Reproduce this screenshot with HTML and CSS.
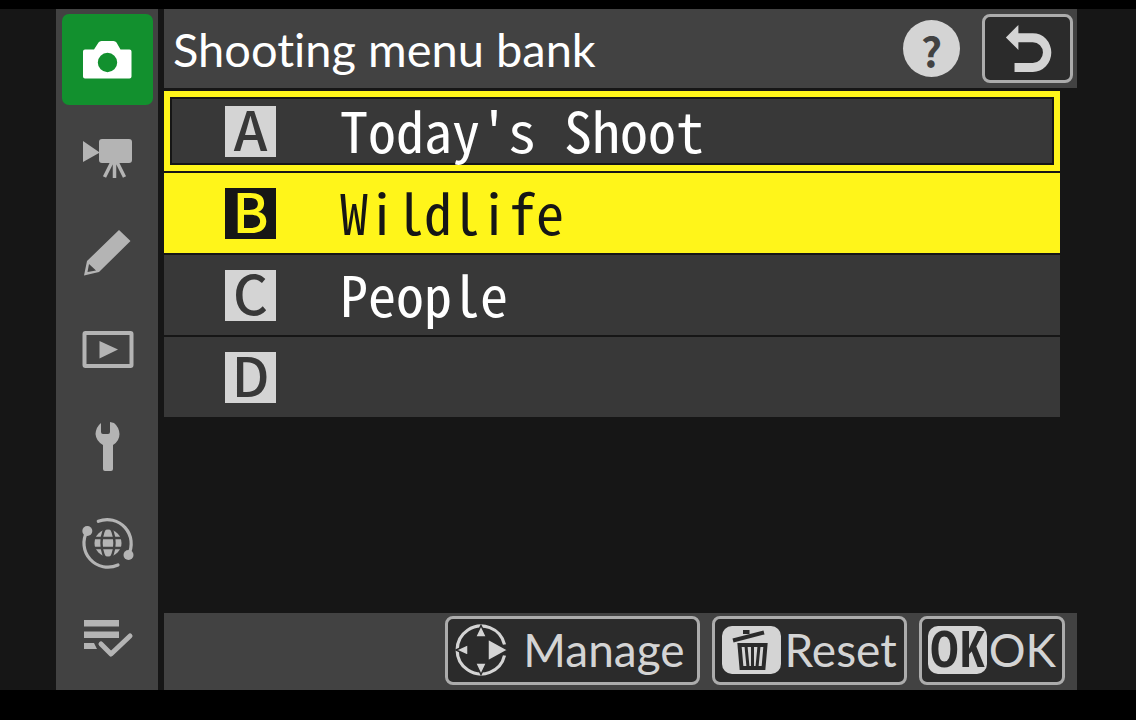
FILE: index.html
```html
<!DOCTYPE html>
<html lang="en">
<head>
<meta charset="utf-8">
<title>Shooting menu bank</title>
<link rel="stylesheet" href="styles.css">
</head>
<body>
<div class="screen">
  <nav class="tabs" aria-label="Menus">
    <button class="tab tab-active" aria-label="Photo shooting menu">
      <svg class="icon" viewBox="1 0 52 52"><path fill="#fff" fill-rule="evenodd" d="M2 17.500Q2 15.500 4 15.500H13L17.500 8.500Q18.500 7 20.500 7H32.500Q34.500 7 35.500 8.500L39.500 15.500H48.500Q50.500 15.500 50.500 17.500V42.500Q50.500 44.500 48.500 44.500H4Q2 44.500 2 42.500ZM26.500 18.800A9.700 9.700 0 1 0 26.500 38.200A9.700 9.700 0 1 0 26.500 18.800Z"/></svg>
    </button>
    <button class="tab" aria-label="Video recording menu">
      <svg class="icon" viewBox="1 -2 52 52"><path fill="currentColor" d="M2 8L18 19V9Q18 6 21 6H48Q51 6 51 9V27Q51 30 48 30H21Q18 30 18 27V20L2 29Z"/><path fill="none" stroke="currentColor" stroke-width="3.500" d="M31 29L23.500 44M33.500 29V45M36 29L43.500 44"/></svg>
    </button>
    <button class="tab" aria-label="Custom settings menu">
      <svg class="icon" viewBox="1 1 52 52"><path fill="currentColor" fill-rule="evenodd" d="M38 3L49.500 14L18 45L3 48.500L6 34ZM8 37L6.500 45L15 43.500Z"/></svg>
    </button>
    <button class="tab" aria-label="Playback menu">
      <svg class="icon" viewBox="1 1 52 52"><rect x="3.500" y="9" width="47" height="33" rx="1" fill="none" stroke="currentColor" stroke-width="4"/><path fill="currentColor" d="M18.500 17L37 25.500L18.500 34.500Z"/></svg>
    </button>
    <button class="tab" aria-label="Setup menu">
      <svg class="icon" viewBox="1 1 52 52"><path fill="currentColor" d="M20 2V11Q20 13 22 13H27Q29 13 29 11V1L33 2Q38 6 38.500 13Q38.500 20 32 24V48Q32 50 30 50H24Q22 50 22 48V24Q15 20 14.500 13Q15 6 20 2Z"/></svg>
    </button>
    <button class="tab" aria-label="Network menu">
      <svg class="icon" viewBox="0 2 52 52"><g fill="none" stroke="currentColor" stroke-width="3.200" stroke-linecap="round"><path d="M16.300 4.300A24 24 0 0 1 46.300 38"/><path d="M36 48A24 24 0 0 1 5.300 14"/></g><circle cx="5.300" cy="14" r="5" fill="currentColor"/><circle cx="46.500" cy="38" r="5" fill="currentColor"/><circle cx="26" cy="26" r="13.500" fill="currentColor"/><g fill="none" stroke="#424242" stroke-width="2.400"><ellipse cx="26" cy="26" rx="6.500" ry="16"/><path d="M11 21H41M11 31H41"/></g></svg>
    </button>
    <button class="tab" aria-label="My menu">
      <svg class="icon" viewBox="1 4 52 52"><path fill="currentColor" d="M3 8H38V14.500H3ZM3 19.500H38V26H3ZM3 31H13L16 37H3Z"/><path fill="none" stroke="currentColor" stroke-width="5" stroke-linecap="round" stroke-linejoin="round" d="M20 32L30 42L49 24"/></svg>
    </button>
  </nav>
  <main class="panel">
    <header class="header">
      <h1 class="title">Shooting menu bank</h1>
      <button class="help" aria-label="Help">?</button>
      <button class="box back" aria-label="Back">
        <svg class="back-icon" viewBox="0 0 52 52"><path fill="#d4d4d4" d="M3 14L16 1V9.500H31A19 20 0 0 1 31 50H12V40.500H31A10.500 10.700 0 0 0 31 19H16V27Z"/></svg>
      </button>
    </header>
    <div class="banks">
      <button class="bank bank-current"><span class="letter">A</span><span class="name">Today's Shoot</span></button>
      <button class="bank bank-selected"><span class="letter">B</span><span class="name">Wildlife</span></button>
      <button class="bank"><span class="letter">C</span><span class="name">People</span></button>
      <button class="bank"><span class="letter">D</span><span class="name"></span></button>
    </div>
    <footer class="footer">
      <button class="box action action-manage">
        <svg class="pad-icon" viewBox="0 0 52 52"><path fill="none" stroke="#d4d4d4" stroke-width="3.200" d="M49.500 20.500A24 24 0 1 0 49.500 31.500"/><g fill="#d4d4d4" stroke="#2b2b2b" stroke-width="1.500"><path d="M26 1.500L31.500 13H20.500ZM26 50.500L31.500 39H20.500ZM1 26L13 20.500V31.500Z"/><path d="M33 15L53 26L33 37Z"/></g></svg>
        <span>Manage</span>
      </button>
      <button class="box action">
        <span class="chip"><svg class="trash-icon" viewBox="0 0 40 44"><g fill="none" stroke="#2b2b2b"><path stroke-width="4" d="M2 12.500L33 4.500"/><path stroke-width="4" d="M12 4H18.500"/><path stroke-width="4" d="M8.500 17H34.500L32.500 40H10.500Z"/><path stroke-width="3" d="M15 18L17 39M21.500 18V39M28 18L26 39"/></g></svg></span>
        <span>Reset</span>
      </button>
      <button class="box action action-ok">
        <span class="chip">OK</span>
        <span>OK</span>
      </button>
    </footer>
  </main>
</div>
</body>
</html>
```
FILE: styles.css
```css
* {
  box-sizing: border-box;
}

body {
  margin: 0;
  min-height: 100vh;
  padding: 9px 0 30px;
  display: flex;
  background: #000;
  color: #fff;
  font-family: Lato, "Open Sans", sans-serif;
  font-variant-ligatures: none;
}

button {
  margin: 0;
  padding: 0;
  border: 0;
  background: none;
  color: inherit;
  font: inherit;
}

svg {
  display: block;
  overflow: visible;
}

.screen {
  flex: 1;
  display: flex;
  gap: 6px;
  padding: 0 59px 0 56px;
  background: #161616;
}

.tabs {
  width: 102px;
  padding: 5px 5px 0 6px;
  display: flex;
  flex-direction: column;
  gap: 6px;
  background: #424242;
}

.tab {
  height: 91px;
  border-radius: 7px;
  display: flex;
  align-items: center;
  justify-content: center;
  color: #b4b4b4;
}

.tab-active {
  background: #12902e;
}

.icon {
  width: 52px;
  height: 52px;
}

.panel {
  flex: 1;
  min-width: 0;
  display: flex;
  flex-direction: column;
}

.header {
  height: 79px;
  padding: 0 4px 0 9px;
  display: flex;
  align-items: center;
  background: #424242;
}

.title {
  flex: 1;
  margin: 0;
  font-size: 47px;
  font-weight: 400;
  line-height: 80px;
}

.help {
  width: 57px;
  height: 57px;
  margin-right: 22px;
  border-radius: 50%;
  background: #d4d4d4;
  color: #424242;
  font: 700 41px/52px "Noto Sans CJK JP", sans-serif;
}

.box {
  height: 69px;
  border: 3px solid #acacac;
  border-radius: 8px;
  background: #2b2b2b;
}

.back {
  width: 91px;
  display: flex;
  align-items: center;
  justify-content: center;
}

.back-icon {
  width: 50px;
  height: 50px;
}

.banks {
  margin: 3px 17px 0 0;
  display: flex;
  flex-direction: column;
  gap: 2px;
}

.bank {
  height: 80px;
  padding-left: 61px;
  display: flex;
  align-items: center;
  gap: 64px;
  background: #383838;
  text-align: left;
}

.bank-current {
  padding-left: 55px;
  border: 6px solid #fff51a;
  box-shadow: inset 0 0 0 2px #161616;
}

.bank-selected {
  background: #fff51a;
  color: #161616;
}

.letter {
  width: 51px;
  height: 51px;
  background: #d4d4d4;
  color: #383838;
  font: 500 54px/44px "Noto Sans CJK JP", sans-serif;
  text-align: center;
}

.bank-selected .letter {
  background: #161616;
  color: #fff51a;
}

.name {
  margin-bottom: 5px;
  font: 400 56px/64px "Noto Sans CJK JP", "Noto Sans Mono CJK JP", monospace;
  font-feature-settings: "hwid";
}

.footer {
  height: 77px;
  margin-top: auto;
  padding: 0 12px 3px;
  display: flex;
  align-items: center;
  justify-content: flex-end;
  gap: 12px;
  background: #424242;
}

.action {
  padding: 0 7px;
  display: flex;
  align-items: center;
  gap: 4px;
  color: #d4d4d4;
  font-size: 46px;
  line-height: 60px;
}

.action-manage {
  gap: 16px;
  padding-right: 12px;
}

.action-ok {
  gap: 2px;
  padding: 0 6px;
}

.pad-icon {
  width: 52px;
  height: 52px;
}

.chip {
  width: 59px;
  height: 48px;
  border-radius: 10px;
  display: flex;
  align-items: center;
  justify-content: center;
  background: #d4d4d4;
  color: #2b2b2b;
  font: 700 50px/44px "Open Sans Condensed", "Open Sans", sans-serif;
}

.chip:not(:has(svg)) {
  padding-bottom: 4px;
}

.trash-icon {
  width: 40px;
  height: 44px;
}
```
